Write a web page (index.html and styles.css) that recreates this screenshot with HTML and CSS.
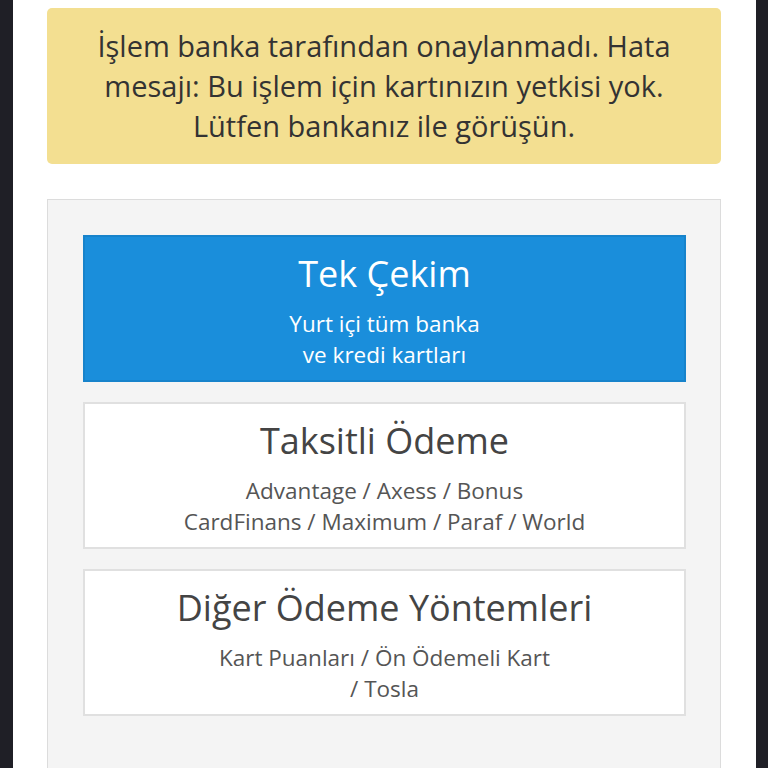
FILE: index.html
```html
<!DOCTYPE html>
<html lang="tr">
<head>
<meta charset="utf-8">
<link rel="stylesheet" href="styles.css">
</head>
<body>
<div class="page">
  <div class="alert">İşlem banka tarafından onaylanmadı. Hata mesajı: Bu işlem için kartınızın yetkisi yok. Lütfen bankanız ile görüşün.</div>
  <div class="panel">
    <div class="option active">
      <div class="title">Tek Çekim</div>
      <div class="sub">Yurt içi tüm banka<br>ve kredi kartları</div>
    </div>
    <div class="option">
      <div class="title">Taksitli Ödeme</div>
      <div class="sub">Advantage / Axess / Bonus<br>CardFinans / Maximum / Paraf / World</div>
    </div>
    <div class="option">
      <div class="title">Diğer Ödeme Yöntemleri</div>
      <div class="sub">Kart Puanları / Ön Ödemeli Kart<br>/ Tosla</div>
    </div>
  </div>
</div>
</body>
</html>
```
FILE: styles.css
```css
html, body {
  margin: 0;
  padding: 0;
  background: #1f1f26;
  height: 100%;
  overflow: hidden;
}
.page {
  margin-left: 13px;
  width: 743px;
  min-height: 768px;
  background: #ffffff;
  box-sizing: border-box;
  padding: 8px 35px 0 34px;
  font-family: "Open Sans", "Noto Sans", sans-serif;
}
.alert {
  background: #f3df91;
  color: #333333;
  border-radius: 5px;
  padding: 18px 24px;
  font-size: 29px;
  line-height: 40px;
  text-align: center;
}
.panel {
  margin-top: 35px;
  background: #f4f4f4;
  border: 1px solid #dcdcdc;
  padding: 35px 34px 60px 35px;
  display: flex;
  flex-direction: column;
  gap: 20px;
}
.option {
  background: #ffffff;
  border: 2px solid #e0e0e0;
  text-align: center;
  padding: 15px 10px 10px;
  color: #444444;
}
.option.active {
  background: #1a8edb;
  border-color: #1783cb;
  color: #ffffff;
}
.title {
  font-size: 36px;
  line-height: 44px;
}
.sub {
  margin-top: 12px;
  font-size: 22.5px;
  line-height: 31px;
  color: #555555;
}
.option.active .sub {
  color: #ffffff;
}
```
